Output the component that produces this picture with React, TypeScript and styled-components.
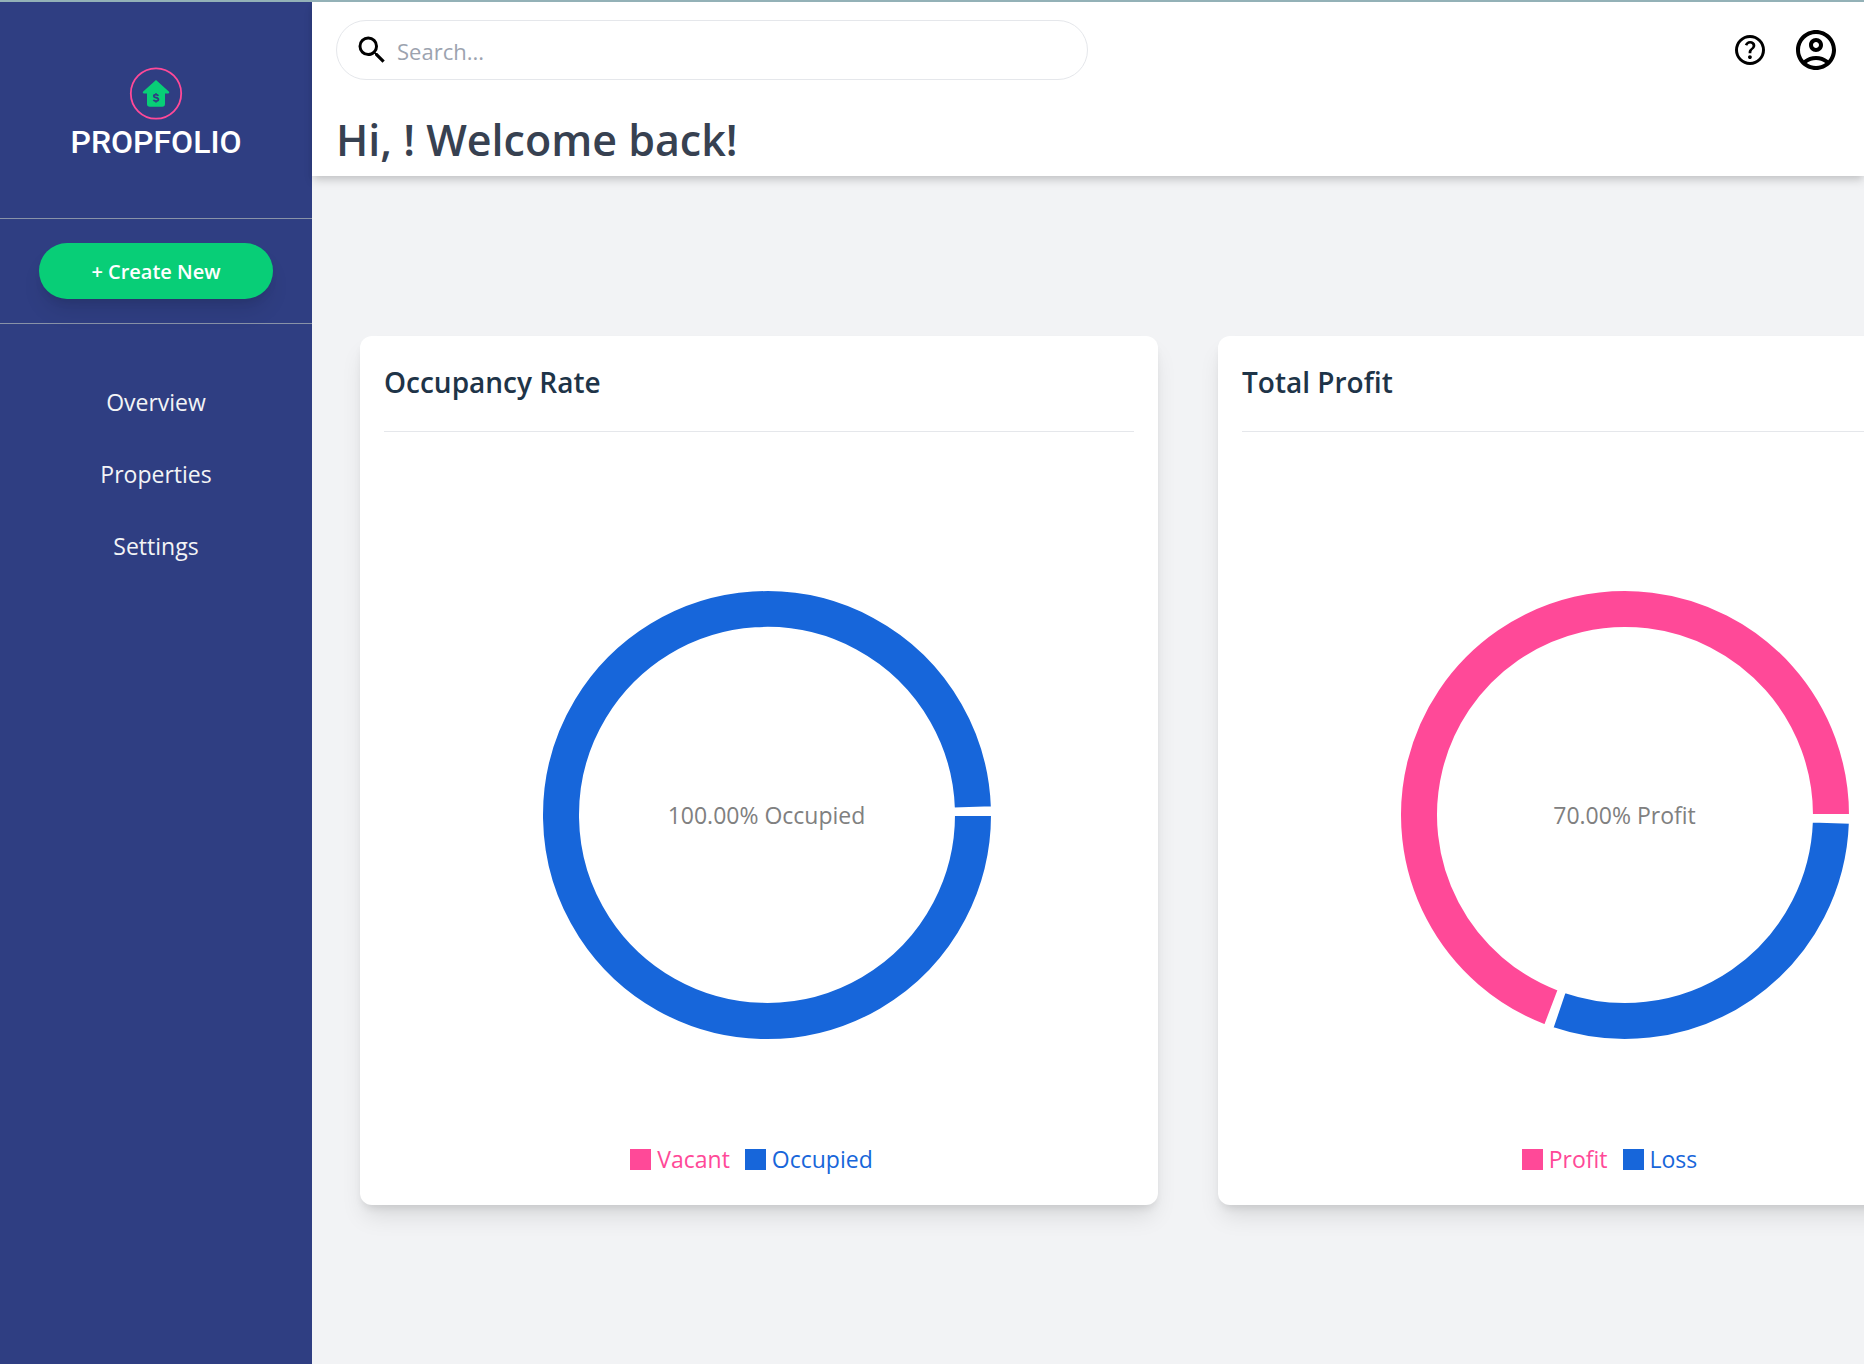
import React from "react";
import styled, { createGlobalStyle } from "styled-components";
import { MdSearch, MdOutlineAccountCircle } from "react-icons/md";

const PINK = "#ff4998";
const BLUE = "#1766da";

const GlobalStyle = createGlobalStyle`
  *, *::before, *::after { box-sizing: border-box; }
  body {
    margin: 0;
    background: #f2f3f5;
    font-family: "Open Sans", "Noto Sans", sans-serif;
    font-size: 23px;
    line-height: 36px;
  }
  h1, h2, ul { margin: 0; padding: 0; }
`;

const Page = styled.div`
  display: flex;
  min-height: 100vh;
  border-top: 2px solid #93b1b7;
  overflow: hidden;
`;

const Sidebar = styled.aside`
  flex: none;
  width: 312px;
  background: #2f3e82;
  color: #f3f4f6;
`;

const Brand = styled.div`
  display: flex;
  flex-direction: column;
  align-items: center;
  padding: 64px 0 56px;
  gap: 2px;
`;

const BrandName = styled.span`
  font-family: Roboto, sans-serif;
  font-size: 32px;
  font-weight: 500;
  line-height: 40px;
  color: #fff;
`;

const CreateBar = styled.div`
  border-top: 1px solid #8892a8;
  border-bottom: 1px solid #8892a8;
  padding: 24px 0;
  display: flex;
  justify-content: center;
`;

const CreateButton = styled.button`
  width: 75%;
  height: 56px;
  padding: 2px 0 0;
  border: 0;
  border-radius: 28px;
  background: #08ce77;
  color: #fff;
  font: inherit;
  font-size: 20px;
  font-weight: 600;
  box-shadow: 0 15px 22px -4px rgba(0, 0, 0, 0.1), 0 6px 9px -3px rgba(0, 0, 0, 0.08);
`;

const Nav = styled.nav`
  display: flex;
  flex-direction: column;
  align-items: center;
  gap: 36px;
  padding: 60px 0;
`;

const NavLink = styled.a`
  color: inherit;
  text-decoration: none;
`;

const Main = styled.main`
  flex: 1;
  min-width: 0;
`;

const Header = styled.header`
  background: #fff;
  padding: 18px 24px 6px;
  box-shadow: 0 6px 9px -1px rgba(0, 0, 0, 0.13), 0 3px 6px -1px rgba(0, 0, 0, 0.08);
`;

const Toolbar = styled.div`
  display: flex;
  align-items: center;
  justify-content: space-between;
`;

const SearchBox = styled.label`
  display: flex;
  align-items: center;
  gap: 7px;
  width: 50%;
  height: 60px;
  padding: 0 17px;
  border: 1px solid #e5e7eb;
  border-radius: 30px;
`;

const SearchInput = styled.input`
  flex: 1;
  min-width: 0;
  padding: 2px 0 0;
  border: 0;
  outline: 0;
  background: transparent;
  font: inherit;
  font-size: 22px;
  &::placeholder { color: #9ca3af; opacity: 1; }
`;

const Actions = styled.div`
  display: flex;
  align-items: center;
  gap: 24px;
`;

const IconButton = styled.button`
  display: flex;
  padding: 0;
  border: 0;
  background: none;
  color: #000;
`;

const Greeting = styled.h1`
  margin-top: 30px;
  font-size: 43px;
  font-weight: 600;
  line-height: 60px;
  color: #374151;
`;

const Cards = styled.section`
  display: flex;
  gap: 60px;
  padding: 160px 48px 120px;
`;

const Card = styled.article`
  flex: none;
  width: 798px;
  padding: 24px;
  border-radius: 12px;
  background: #fff;
  box-shadow: 0 15px 23px -4px rgba(0, 0, 0, 0.1), 0 6px 9px -3px rgba(0, 0, 0, 0.1);
`;

const CardTitle = styled.h2`
  padding-bottom: 26px;
  border-bottom: 1px solid #e5e7eb;
  font-size: 28px;
  font-weight: 600;
  line-height: 45px;
  color: #1e3448;
`;

const Plot = styled.div`
  display: grid;
  place-items: center;
  padding: 158px 0 101px 15px;
  & > * { grid-area: 1 / 1; }
`;

const PlotLabel = styled.span`
  color: #808080;
`;

const Legend = styled.ul`
  display: flex;
  justify-content: center;
  list-style: none;
  padding-bottom: 4px;
`;

const LegendItem = styled.li<{ $color: string }>`
  display: flex;
  align-items: center;
  gap: 6px;
  margin-right: 15px;
  color: ${(p) => p.$color};
  &::before {
    content: "";
    width: 21px;
    height: 21px;
    background: ${(p) => p.$color};
  }
`;

type Slice = { from: number; to: number; color: string };

const OUTER = 225;
const INNER = 187;

function arc({ from, to }: Slice) {
  const at = (r: number, deg: number) => {
    const a = (deg * Math.PI) / 180;
    return `${(r * Math.cos(a)).toFixed(2)} ${(-r * Math.sin(a)).toFixed(2)}`;
  };
  const large = to - from > 180 ? 1 : 0;
  return `M${at(OUTER, from)}A${OUTER} ${OUTER} 0 ${large} 0 ${at(OUTER, to)}L${at(INNER, to)}A${INNER} ${INNER} 0 ${large} 1 ${at(INNER, from)}Z`;
}

function DonutCard(props: {
  title: string;
  label: string;
  slices: Slice[];
  legend: [string, string];
}) {
  return (
    <Card>
      <CardTitle>{props.title}</CardTitle>
      <Plot>
        <svg width="450" height="450" viewBox="-225 -225 450 450" aria-hidden="true">
          {props.slices.map((s) => (
            <path key={s.from} d={arc(s)} fill={s.color} stroke="#fff" strokeWidth="2" />
          ))}
        </svg>
        <PlotLabel>{props.label}</PlotLabel>
      </Plot>
      <Legend>
        <LegendItem $color={PINK}>{props.legend[0]}</LegendItem>
        <LegendItem $color={BLUE}>{props.legend[1]}</LegendItem>
      </Legend>
    </Card>
  );
}

const LogoMark = () => (
  <svg width="54" height="54" viewBox="0 0 54 54" aria-hidden="true">
    <circle cx="27" cy="27.5" r="25.2" fill="none" stroke={PINK} strokeWidth="1.8" />
    <path
      d="M27 14 39.8 25.6Q41 27.4 39 27.4H36V38Q36 40.8 33.2 40.8H20.8Q18 40.8 18 38V27.4H15Q13 27.4 14.2 25.6Z"
      fill="#08ce77"
    />
    <path
      d="M29.3 29.9Q28.8 28.7 27 28.7 24.8 28.7 24.8 30.2 24.8 31.3 27 31.7 29.4 32.1 29.4 33.6 29.4 35.1 27 35.1 25 35.1 24.5 33.7M27 27.2V28.7M27 35.1V36.6"
      fill="none"
      stroke="#2f3e82"
      strokeWidth="1.8"
    />
  </svg>
);

const HelpIcon = () => (
  <svg width="36" height="36" viewBox="0 -960 960 960" fill="currentColor" aria-hidden="true">
    <path d="M478-240q21 0 35.500-14.500T528-290q0-21-14.500-35.500T478-340q-21 0-35.500 14.500T428-290q0 21 14.500 35.500T478-240Zm-36-154h74q0-33 7.500-52t42.500-52q26-26 41-49.500t15-56.500q0-56-41-86t-97-30q-57 0-92.500 30T342-618l66 26q5-18 22.500-39t53.500-21q32 0 48 17.500t16 38.500q0 20-12 37.500T506-526q-44 39-54 59t-10 73Zm38 314q-83 0-156-31.500T197-197q-54-54-85.500-127T80-480q0-83 31.500-156T197-763q54-54 127-85.500T480-880q83 0 156 31.500T763-763q54 54 85.500 127T880-480q0 83-31.500 156T763-197q-54 54-127 85.500T480-80Zm0-80q134 0 227-93t93-227q0-134-93-227t-227-93q-134 0-227 93t-93 227q0 134 93 227t227 93Z" />
  </svg>
);

export default function App() {
  return (
    <>
      <GlobalStyle />
      <Page>
        <Sidebar>
          <Brand>
            <LogoMark />
            <BrandName>PROPFOLIO</BrandName>
          </Brand>
          <CreateBar>
            <CreateButton type="button">+ Create New</CreateButton>
          </CreateBar>
          <Nav>
            <NavLink href="#overview">Overview</NavLink>
            <NavLink href="#properties">Properties</NavLink>
            <NavLink href="#settings">Settings</NavLink>
          </Nav>
        </Sidebar>
        <Main>
          <Header>
            <Toolbar>
              <SearchBox>
                <MdSearch size={36} aria-hidden="true" />
                <SearchInput type="text" placeholder="Search..." aria-label="Search" />
              </SearchBox>
              <Actions>
                <IconButton type="button" aria-label="Help">
                  <HelpIcon />
                </IconButton>
                <IconButton type="button" aria-label="Account">
                  <MdOutlineAccountCircle size={48} />
                </IconButton>
              </Actions>
            </Toolbar>
            <Greeting>Hi, ! Welcome back!</Greeting>
          </Header>
          <Cards>
            <DonutCard
              title="Occupancy Rate"
              label="100.00% Occupied"
              slices={[{ from: 2, to: 360, color: BLUE }]}
              legend={["Vacant", "Occupied"]}
            />
            <DonutCard
              title="Total Profit"
              label="70.00% Profit"
              slices={[
                { from: 0, to: 249.2, color: PINK },
                { from: 251.2, to: 358, color: BLUE },
              ]}
              legend={["Profit", "Loss"]}
            />
          </Cards>
        </Main>
      </Page>
    </>
  );
}
